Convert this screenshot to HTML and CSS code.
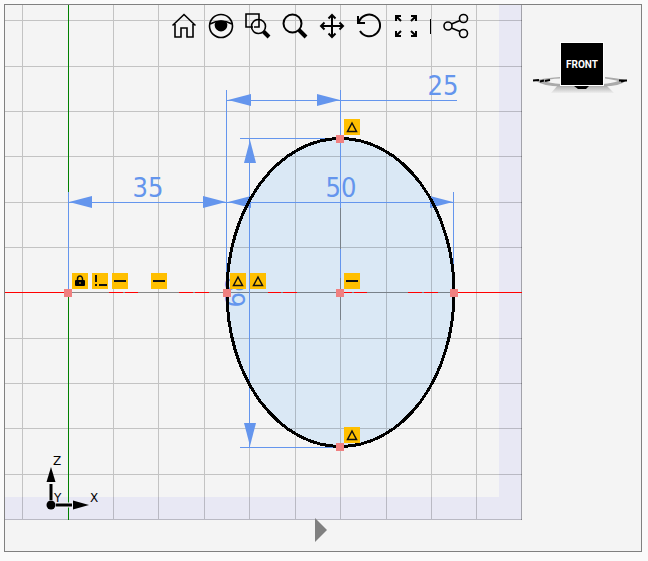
FILE: index.html
```html
<!DOCTYPE html>
<html lang="en">
<head>
<meta charset="utf-8">
<meta name="viewport" content="width=device-width, initial-scale=1">
<title>Sketch</title>
<link rel="stylesheet" href="styles.css">
</head>
<body>
<main class="viewport">
  <svg class="sketch" viewBox="5 5 636 546" preserveAspectRatio="xMinYMin meet" role="img" aria-label="Ellipse sketch">
    <defs>
      <g id="triangle"><rect class="badge" width="16" height="16"/><path class="mark thin" d="M8 4L12.500 12.500H3.500Z"/></g>
      <g id="horizontal"><rect class="badge" width="16" height="16"/><path class="mark" d="M2 8H14"/></g>
      <rect id="point" class="point" x="-4" y="-4" width="8" height="8"/>
      <path id="arrow" d="M0 0L23 -6V6Z"/>
    </defs>

    <path class="margin" d="M499 5H522V520H5V497H499Z"/>
    <path class="ellipse-fill" d="M227 292.5A113.5 154 0 0 1 454 292.5A113.5 154 0 0 1 227 292.5Z"/>
    <g class="crisp">
      <path class="grid" d="M22.5 5V520M68.5 5V520M113.5 5V520M158.5 5V520M204.5 5V520M249.5 5V520M295.5 5V520M340.5 5V520M386.5 5V520M431.5 5V520M476.5 5V520M5 20.5H522M5 66.5H522M5 111.5H522M5 156.5H522M5 202.5H522M5 247.5H522M5 292.5H522M5 338.5H522M5 383.5H522M5 428.5H522M5 474.5H522M5 519.5H522"/>
      <path class="grid edge" d="M521.5 5V520M340.5 208V320M68 292.5H454"/>
      <path class="axis-z" d="M68.5 5V520"/>
      <path class="axis-x" d="M5 292.5H68M109 292.5H123M125 292.5H138M179 292.5H193M195 292.5H209M268 292.5H281M283 292.5H297M344 292.5H352M354 292.5H367M408 292.5H422M424 292.5H438M454 292.5H522"/>
      <path class="dim-line" d="M68.5 192V292M226.5 90V292M340.5 90V208M340.5 249V278M453.5 192V292M249.5 139V447M240 138.5H340M240 447.5H340M68 202.5H454M227 100.5H457"/>
    </g>
    <g class="dim-arrow">
      <use href="#arrow" x="69" y="202"/>
      <use href="#arrow" transform="translate(226 202) rotate(180)"/>
      <use href="#arrow" x="228" y="202"/>
      <use href="#arrow" transform="translate(453 202) rotate(180)"/>
      <use href="#arrow" x="228" y="100"/>
      <use href="#arrow" transform="translate(340 100) rotate(180)"/>
      <use href="#arrow" transform="translate(250 140) rotate(90)"/>
      <use href="#arrow" transform="translate(250 446) rotate(-90)"/>
    </g>
    <g class="dim-text">
      <text x="148" y="197">35</text>
      <text x="341" y="197">50</text>
      <text x="443" y="95">25</text>
      <text transform="translate(245 292) rotate(-90)">68</text>
    </g>
    <ellipse class="ellipse" cx="340.5" cy="292.5" rx="113.5" ry="154"/>

    <use href="#point" x="68" y="293"/>
    <use href="#point" x="227" y="293"/>
    <use href="#point" x="340" y="293"/>
    <use href="#point" x="454" y="293"/>
    <use href="#point" x="340" y="139"/>
    <use href="#point" x="340" y="447"/>

    <g transform="translate(72 273)">
      <rect class="badge" width="16" height="16"/>
      <path class="mark thin" d="M5.500 8V6A2.500 3 0 0 1 10.500 6V8"/>
      <rect x="3" y="7" width="10" height="6" rx="1"/>
      <path d="M7.500 9H8.500V11H7.500Z" fill="#ffbf00"/>
    </g>
    <g transform="translate(92 273)">
      <rect class="badge" width="16" height="16"/>
      <path class="mark" d="M4 2V9M4 11V13M7 12H15"/>
    </g>
    <use href="#horizontal" x="112" y="273"/>
    <use href="#horizontal" x="151" y="273"/>
    <use href="#horizontal" x="344" y="273"/>
    <use href="#triangle" x="230" y="273"/>
    <use href="#triangle" x="250" y="273"/>
    <use href="#triangle" x="344" y="119"/>
    <use href="#triangle" x="344" y="427"/>

    <g class="triad">
      <path class="halo" d="M51 500V484M56 505H72"/>
      <path class="shaft" d="M51 500V484M56 505H72"/>
      <path d="M51 467L55.500 482H46.500Z"/>
      <path d="M89 505L73 500.500V509.500Z"/>
      <circle cx="51" cy="505" r="4.500"/>
      <text x="53" y="465">Z</text>
      <text x="54" y="502">Y</text>
      <text x="90" y="502">X</text>
    </g>
  </svg>

  <nav class="toolbar" aria-label="View tools">
    <button class="tool" aria-label="Home view"><svg viewBox="0 0 28 28"><path d="M2.500 13.500L14 2.500L25.500 13.500M5 12V25H11V16H17V25H23V12"/></svg></button>
    <button class="tool" aria-label="Visibility"><svg viewBox="0 0 28 28"><circle cx="14" cy="14" r="11.500"/><path d="M3 12Q14 6 25 12"/><path class="solid" d="M9.500 10Q14 8.500 18.500 10A5.500 5.500 0 1 1 9.500 10Z"/></svg></button>
    <button class="tool" aria-label="Zoom to area"><svg viewBox="0 0 28 28"><path d="M9 15H2V2H15V8"/><path d="M15 8V15H10"/><circle cx="14.500" cy="14.500" r="7"/><path class="thick" d="M19.500 19.500L25 25"/></svg></button>
    <button class="tool" aria-label="Zoom"><svg viewBox="0 0 28 28"><circle class="bold" cx="11.500" cy="11.500" r="9"/><path class="thick" d="M18 18L25 25"/></svg></button>
    <button class="tool" aria-label="Pan"><svg viewBox="0 0 28 28"><path class="bold" d="M14 3V25M3 14H25M10.500 6.500L14 3L17.500 6.500M10.500 21.500L14 25L17.500 21.500M6.500 10.500L3 14L6.500 17.500M21.500 10.500L25 14L21.500 17.500"/></svg></button>
    <button class="tool" aria-label="Rotate"><svg viewBox="0 0 28 28"><path class="bold" d="M4 10A10.800 10.800 0 1 1 5 19"/><path class="bold" d="M3 4V11H10"/></svg></button>
    <button class="tool" aria-label="Fit view"><svg viewBox="0 0 28 28"><path class="bold" d="M9 4H4V9M4 4L9 9M19 4H24V9M24 4L19 9M4 19V24H9M4 24L9 19M24 19V24H19M24 24L19 19"/></svg></button>
    <span class="separator"></span>
    <button class="tool" aria-label="Share"><svg viewBox="0 0 28 28"><circle cx="6" cy="14" r="4"/><circle cx="21.500" cy="6.500" r="4"/><circle cx="21.500" cy="21.500" r="4"/><path d="M9.500 12L18 8.500M9.500 16L18 19.500"/></svg></button>
  </nav>

  <div class="view-cube">
    <svg class="compass" viewBox="0 0 98 60" aria-hidden="true">
      <defs><linearGradient id="shade" x1="0" y1="0" x2="0" y2="1"><stop offset="0" stop-color="#aaa"/><stop offset="1" stop-color="#eee"/></linearGradient></defs>
      <path d="M27 44H75L83 52H20Z" fill="url(#shade)"/>
      <path class="ring" d="M29 36Q5 38 5 40Q12 45 30 45.500H72Q89 45 95 40Q94 38 74 36L74 37.500Q85 39 87 40Q82 42 72 43H30Q18 42 13 40Q17 38 29 37.500Z"/>
      <path class="letters" d="M2 39.500L8 39M9 40.500L13 39.500M14 40L19 39M88 39.500H96M90 40.500L94 39.500"/>
      <path d="M43 45H58L55 48H47Z"/>
    </svg>
    <button class="face">FRONT</button>
  </div>

  <footer class="timeline">
    <button class="play" aria-label="Expand panel"><svg viewBox="0 0 14 26"><path d="M1 1L13 13L1 25Z"/></svg></button>
  </footer>
</main>
</body>
</html>
```

FILE: styles.css
```css
* {
  box-sizing: border-box;
}

body {
  display: flex;
  min-height: 100vh;
  margin: 0;
  padding: 4px 6px 9px 4px;
  background: #fafafa;
  font-family: "DejaVu Sans Condensed", "DejaVu Sans", sans-serif;
}

button {
  margin: 0;
  padding: 0;
  border: 0;
  background: none;
}

.viewport {
  position: relative;
  display: flex;
  flex: 1;
  flex-direction: column;
  justify-content: space-between;
  border: 1px solid #808080;
  background: #f4f4f4;
}

.sketch {
  position: absolute;
  inset: 0;
  width: 100%;
  height: 100%;
}

.crisp {
  fill: none;
  shape-rendering: crispEdges;
}

.margin {
  fill: #e8e8f4;
}

.grid {
  stroke: #000;
  stroke-opacity: 0.2;
}

.edge {
  stroke-opacity: 0.3;
}

.axis-z {
  stroke: #008000;
}

.axis-x {
  stroke: #f00;
}

.dim-line {
  stroke: #6495ed;
}

.dim-arrow,
.dim-text {
  fill: #6495ed;
}

.dim-text {
  font-size: 27px;
  text-anchor: middle;
}

.ellipse-fill {
  fill: #dae8f5;
}

.ellipse {
  fill: none;
  stroke: #000;
  stroke-width: 3px;
  shape-rendering: crispEdges;
}

.point {
  fill: #f08080;
}

.badge {
  fill: #ffbf00;
}

.mark {
  fill: none;
  stroke: #111;
  stroke-width: 2px;
}

.thin {
  stroke-width: 1.5px;
}

.shaft,
.halo {
  stroke: #000;
  stroke-width: 3px;
}

.halo {
  stroke: #f4f4f4;
  stroke-width: 5px;
}

.triad text {
  font-family: "DejaVu Sans", sans-serif;
  font-size: 12px;
}

.toolbar {
  position: relative;
  display: flex;
  align-items: center;
  justify-content: center;
  padding: 5px 7px 0 0;
}

.tool {
  display: flex;
  align-items: center;
  justify-content: center;
  width: 37px;
  height: 32px;
}

.tool svg {
  width: 28px;
  height: 28px;
  fill: none;
  stroke: #000;
  stroke-width: 1.6px;
}

.tool .bold {
  stroke-width: 2px;
}

.tool .thick {
  stroke-width: 4px;
}

.tool .solid {
  fill: #000;
}

.separator {
  width: 1px;
  height: 15px;
  margin: 0 6px;
  background: #000;
}

.view-cube {
  position: absolute;
  top: 36px;
  right: 12px;
  width: 98px;
  height: 60px;
}

.compass {
  position: absolute;
  inset: 0;
}

.ring {
  fill: #aaa;
}

.letters {
  stroke: #000;
  stroke-width: 2px;
}

.face {
  position: absolute;
  top: 2px;
  left: 30px;
  width: 42px;
  height: 42px;
  background: #000;
  box-shadow: 0 0 0 1px #fff;
  color: #fff;
  font: bold 10px Roboto, sans-serif;
}

.timeline {
  position: relative;
  display: flex;
  justify-content: center;
  padding: 0 5px 8px 0;
}

.play {
  display: flex;
}

.play svg {
  width: 14px;
  height: 26px;
  fill: #808080;
}
```
